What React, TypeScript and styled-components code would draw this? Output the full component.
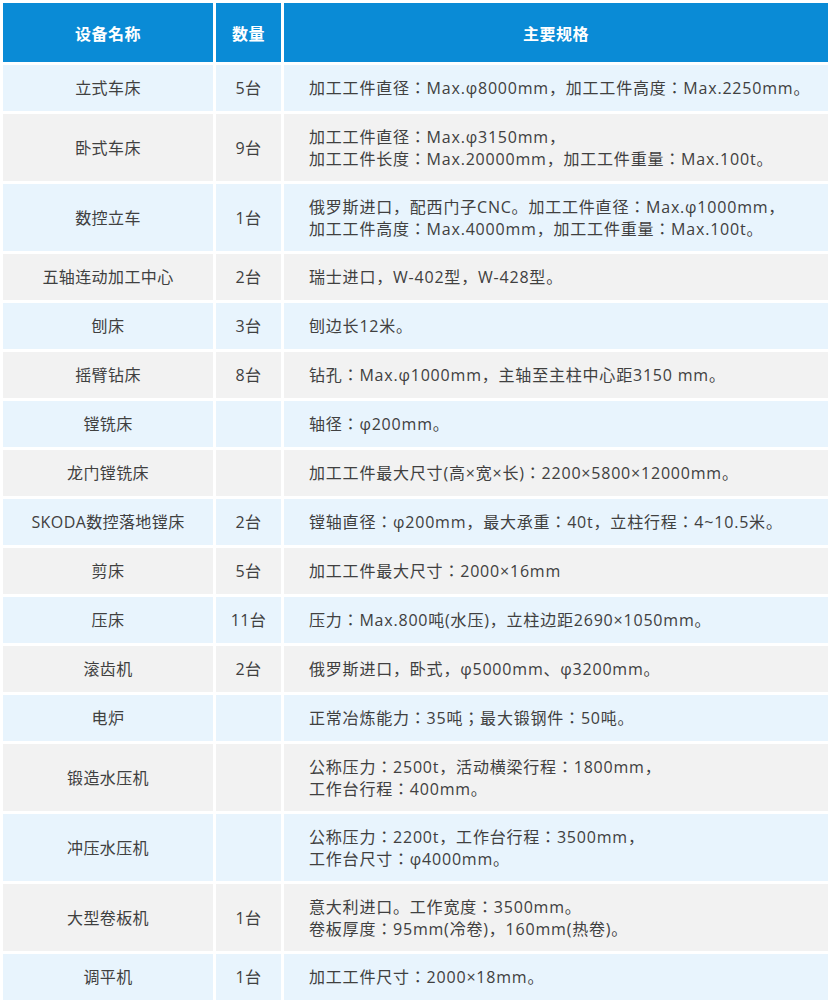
import styled, { createGlobalStyle } from "styled-components";

type Equipment = {
    name: string;
    count: string;
    specs: string[];
};

const rows: Equipment[] = [
    { name: "立式车床", count: "5台", specs: ["加工工件直径：Max.φ8000mm，加工工件高度：Max.2250mm。"] },
    { name: "卧式车床", count: "9台", specs: ["加工工件直径：Max.φ3150mm，", "加工工件长度：Max.20000mm，加工工件重量：Max.100t。"] },
    { name: "数控立车", count: "1台", specs: ["俄罗斯进口，配西门子CNC。加工工件直径：Max.φ1000mm，", "加工工件高度：Max.4000mm，加工工件重量：Max.100t。"] },
    { name: "五轴连动加工中心", count: "2台", specs: ["瑞士进口，W-402型，W-428型。"] },
    { name: "刨床", count: "3台", specs: ["刨边长12米。"] },
    { name: "摇臂钻床", count: "8台", specs: ["钻孔：Max.φ1000mm，主轴至主柱中心距3150 mm。"] },
    { name: "镗铣床", count: "", specs: ["轴径：φ200mm。"] },
    { name: "龙门镗铣床", count: "", specs: ["加工工件最大尺寸(高×宽×长)：2200×5800×12000mm。"] },
    { name: "SKODA数控落地镗床", count: "2台", specs: ["镗轴直径：φ200mm，最大承重：40t，立柱行程：4~10.5米。"] },
    { name: "剪床", count: "5台", specs: ["加工工件最大尺寸：2000×16mm"] },
    { name: "压床", count: "11台", specs: ["压力：Max.800吨(水压)，立柱边距2690×1050mm。"] },
    { name: "滚齿机", count: "2台", specs: ["俄罗斯进口，卧式，φ5000mm、φ3200mm。"] },
    { name: "电炉", count: "", specs: ["正常冶炼能力：35吨；最大锻钢件：50吨。"] },
    { name: "锻造水压机", count: "", specs: ["公称压力：2500t，活动横梁行程：1800mm，", "工作台行程：400mm。"] },
    { name: "冲压水压机", count: "", specs: ["公称压力：2200t，工作台行程：3500mm，", "工作台尺寸：φ4000mm。"] },
    { name: "大型卷板机", count: "1台", specs: ["意大利进口。工作宽度：3500mm。", "卷板厚度：95mm(冷卷)，160mm(热卷)。"] },
    { name: "调平机", count: "1台", specs: ["加工工件尺寸：2000×18mm。"] },
];

const GlobalStyle = createGlobalStyle`
    body {
        margin: 0;
        background: #ffffff;
        font-family: "Open Sans", "Noto Sans CJK JP", "Noto Sans CJK SC", sans-serif;
    }
`;

const Table = styled.table`
    width: 831px;
    table-layout: fixed;
    border-collapse: separate;
    border-spacing: 3px;
    color: #404040;
`;

const HeadCell = styled.th`
    height: 59px;
    padding: 0;
    background: #0a8bd6;
    color: #ffffff;
    font-size: 16px;
    font-weight: bold;
    text-align: center;
    letter-spacing: 0.5px;
`;

const Row = styled.tr<{ $odd: boolean }>`
    background: ${(p) => (p.$odd ? "#e8f4fd" : "#f2f2f2")};
`;

const NameCell = styled.td`
    padding: 12px 4px;
    text-align: center;
    line-height: 22px;
    font-size: 16px;
    letter-spacing: 0.4px;
`;

const CountCell = styled(NameCell)``;

const SpecCell = styled.td<{ $lines: number }>`
    padding: ${(p) => (p.$lines > 1 ? "11.5px" : "12px")} 8px ${(p) => (p.$lines > 1 ? "11.5px" : "12px")} 25px;
    text-align: left;
    line-height: 22px;
    font-size: 16px;
    letter-spacing: 0.8px;
    white-space: nowrap;
`;

const SpecLine = styled.div``;

export default function App() {
    return (
        <>
            <GlobalStyle />
            <Table>
                <colgroup>
                    <col style={{ width: 210 }} />
                    <col style={{ width: 65 }} />
                    <col />
                </colgroup>
                <thead>
                    <tr>
                        <HeadCell>设备名称</HeadCell>
                        <HeadCell>数量</HeadCell>
                        <HeadCell>主要规格</HeadCell>
                    </tr>
                </thead>
                <tbody>
                    {rows.map((r, i) => (
                        <Row key={r.name} $odd={i % 2 === 0}>
                            <NameCell>{r.name}</NameCell>
                            <CountCell>{r.count}</CountCell>
                            <SpecCell $lines={r.specs.length}>
                                {r.specs.map((s) => (
                                    <SpecLine key={s}>{s}</SpecLine>
                                ))}
                            </SpecCell>
                        </Row>
                    ))}
                </tbody>
            </Table>
        </>
    );
}
